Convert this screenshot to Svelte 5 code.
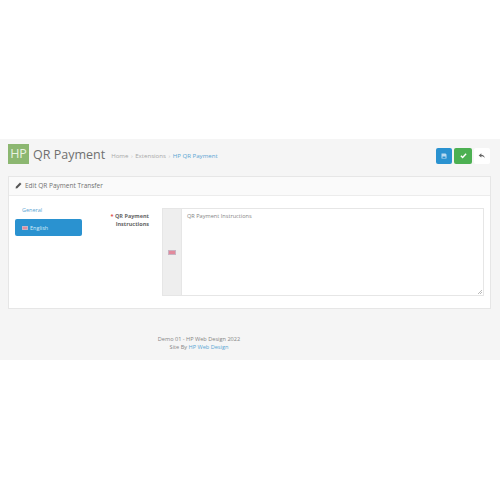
<script lang="ts">
  const crumbs = ['Home', 'Extensions'];
</script>

<div class="page">
  <div class="top-space"></div>
  <div class="content">
    <div class="page-header">
      <div class="logo">HP</div>
      <h1>QR Payment</h1>
      <ul class="breadcrumb">
        {#each crumbs as crumb}
          <li>{crumb}<span class="sep">›</span></li>
        {/each}
        <li class="current">HP QR Payment</li>
      </ul>
      <div class="actions">
        <button class="btn blue" aria-label="Save">
          <svg viewBox="0 0 12 12" width="6" height="6"><path fill="currentColor" d="M1 1h8l2 2v8H1z M3 7v3h6V7z" fill-rule="evenodd" /></svg>
        </button>
        <button class="btn green" aria-label="Save and stay">
          <svg viewBox="0 0 12 12" width="7" height="7"><path fill="none" stroke="currentColor" stroke-width="2.400" d="M1.500 6.500 4.500 9.500 10.500 3" /></svg>
        </button>
        <button class="btn plain" aria-label="Back">
          <svg viewBox="0 0 12 12" width="8" height="8"><path fill="#666" d="M5 2 1 5.200 5 8.400V6.300c2.500 0 4 .7 5 3.200 0-3.500-1.800-5.300-5-5.400z" /></svg>
        </button>
      </div>
    </div>

    <div class="panel">
      <div class="panel-heading">
        <svg viewBox="0 0 12 12" width="7" height="7"><path fill="#555" d="M8.500 1 11 3.500 4 10.500 1 11 1.500 8z" /></svg>
        <span>Edit QR Payment Transfer</span>
      </div>
      <div class="panel-body">
        <div class="tabs">
          <div class="tab-link">General</div>
          <div class="tab-active"><span class="flag small"></span>English</div>
        </div>
        <div class="form-row">
          <div class="label"><span class="req">*</span> QR Payment Instructions</div>
          <div class="input-group">
            <div class="addon"><span class="flag"></span></div>
            <div class="textarea">QR Payment Instructions
              <svg class="grip" viewBox="0 0 6 6" width="4" height="4"><path stroke="#999" stroke-width="1" d="M0 6 6 0M3 6 6 3" /></svg>
            </div>
          </div>
        </div>
      </div>
    </div>

    <footer>
      <div>Demo 01 - HP Web Design 2022</div>
      <div>Site By <span class="link">HP Web Design</span></div>
    </footer>
  </div>
</div>

<style>
  :global(body) {
    background: #fff;
    font-family: "Open Sans", sans-serif;
  }
  .page { height: 500px; overflow: hidden; }
  .top-space { height: 139px; }
  .content {
    background: #f5f5f5;
    height: 221px;
    padding: 5px 9px 0 8px;
    box-sizing: border-box;
    color: #777;
  }
  .page-header {
    display: flex;
    align-items: center;
    height: 20px;
    margin-bottom: 12px;
  }
  .logo {
    width: 21px;
    height: 20px;
    background: #8cb771;
    color: #e9f2e2;
    font-size: 12.500px;
    line-height: 20px;
    text-align: center;
  }
  h1 {
    margin: 0 0 0 4px;
    font-size: 12.500px;
    font-weight: 400;
    color: #707070;
    white-space: nowrap;
  }
  .breadcrumb {
    display: flex;
    list-style: none;
    margin: 2px 0 0 6px;
    padding: 0;
    font-size: 6.100px;
    color: #a8a8a8;
  }
  .sep { margin: 0 2.500px; color: #c4c4c4; }
  .current { color: #5aa5d3; }
  .actions {
    display: flex;
    gap: 2px;
    margin-left: auto;
    margin-top: 3px;
    margin-right: 1px;
  }
  .btn {
    width: 16px;
    height: 16px;
    padding: 0;
    border: 0;
    border-radius: 2px;
    display: flex;
    align-items: center;
    justify-content: center;
    color: #fff;
  }
  .blue { background: #2a92d0; color: #b9daf0; }
  .green { background: #4cb052; width: 18px; }
  .plain { background: #fff; }
  .panel {
    background: #fff;
    border: 1px solid #e6e6e6;
    height: 133px;
    box-sizing: border-box;
  }
  .panel-heading {
    height: 19px;
    padding-bottom: 2px;
    background: #fafafa;
    border-bottom: 1px solid #ececec;
    display: flex;
    align-items: center;
    gap: 3px;
    padding-left: 6px;
    font-size: 6.500px;
    color: #707070;
    box-sizing: border-box;
  }
  .panel-body {
    display: flex;
    padding: 12px 6px 0 6px;
  }
  .tabs { width: 67px; flex-shrink: 0; font-size: 5.500px; }
  .tab-link {
    color: #5aa5d3;
    height: 11px;
    line-height: 5px;
    padding-left: 7px;
    box-sizing: border-box;
  }
  .tab-active {
    height: 17px;
    background: #2a92d0;
    border-radius: 2px;
    color: #d8ecf8;
    display: flex;
    align-items: center;
    padding-left: 7px;
    gap: 2px;
  }
  .flag {
    display: inline-block;
    width: 8px;
    height: 5px;
    background: #e28a9c;
    border: 0.5px solid #c9b3c2;
    box-sizing: border-box;
  }
  .flag.small { width: 6px; height: 4px; }
  .form-row { display: flex; flex: 1; }
  .label {
    width: 67px;
    text-align: right;
    font-size: 5.500px;
    font-weight: 700;
    line-height: 8px;
    color: #666;
    padding-top: 4px;
    box-sizing: border-box;
  }
  .req { color: #e04b4a; }
  .input-group {
    display: flex;
    margin-left: 13px;
    flex: 1;
    height: 88px;
    border: 1px solid #e6e6e6;
    box-sizing: border-box;
  }
  .addon {
    width: 18px;
    background: #eee;
    display: flex;
    align-items: center;
    justify-content: center;
    border-right: 1px solid #e6e6e6;
  }
  .textarea {
    flex: 1;
    position: relative;
    padding: 3px 5px;
    font-size: 5.600px;
    color: #858585;
  }
  .grip { position: absolute; right: 1px; bottom: 1px; }
  footer {
    margin-top: 26px;
    width: 382px;
    text-align: center;
    font-size: 5.600px;
    line-height: 8px;
    color: #858585;
  }
  .link { color: #5aa5d3; }
</style>
